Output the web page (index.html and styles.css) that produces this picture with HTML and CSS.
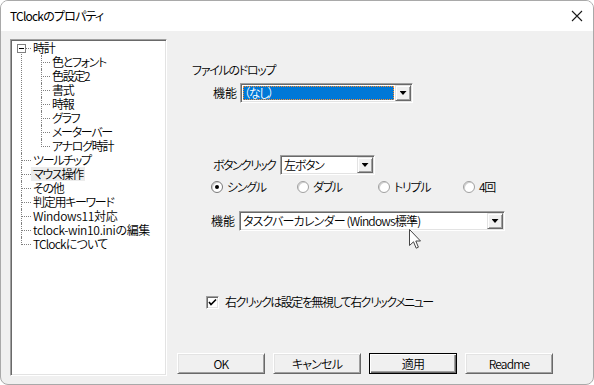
FILE: index.html
```html
<!DOCTYPE html>
<html lang="ja">
<head>
<meta charset="utf-8">
<title>TClockのプロパティ</title>
<link rel="stylesheet" href="styles.css">
</head>
<body>
<div class="window">
  <header class="titlebar">
    <span class="title">TClockのプロパティ</span>
    <span class="close">
      <svg width="12" height="12" viewBox="0 0 12 12"><path d="M1 1L11 11M11 1L1 11" stroke="#1a1a1a" stroke-width="1.1" fill="none"/></svg>
    </span>
  </header>
  <div class="body">
    <div class="tree">
      <ul class="lvl0">
        <li class="open"><span class="box"></span><span class="label">時計</span>
          <ul class="lvl1">
            <li><span class="label">色とフォント</span></li>
            <li><span class="label">色設定2</span></li>
            <li><span class="label">書式</span></li>
            <li><span class="label">時報</span></li>
            <li><span class="label">グラフ</span></li>
            <li><span class="label">メーターバー</span></li>
            <li><span class="label">アナログ時計</span></li>
          </ul>
        </li>
        <li><span class="label">ツールチップ</span></li>
        <li><span class="label sel">マウス操作</span></li>
        <li><span class="label">その他</span></li>
        <li><span class="label">判定用キーワード</span></li>
        <li><span class="label lat">Windows11対応</span></li>
        <li><span class="label lat">tclock-win10.iniの編集</span></li>
        <li><span class="label lat2">TClockについて</span></li>
      </ul>
    </div>
    <div class="main">
      <div class="form">
        <div class="group-title">ファイルのドロップ</div>
        <div class="row row-drop">
          <span class="lbl lbl-func1">機能</span>
          <div class="combo combo-drop focused"><span class="val">（なし）</span><span class="drop"></span></div>
        </div>
        <div class="row row-click">
          <span class="lbl lbl-click">ボタンクリック</span>
          <div class="combo combo-click"><span class="val">左ボタン</span><span class="drop"></span></div>
        </div>
        <div class="radios">
          <label class="radio-item"><span class="radio checked"></span>シングル</label>
          <label class="radio-item"><span class="radio"></span>ダブル</label>
          <label class="radio-item"><span class="radio"></span>トリプル</label>
          <label class="radio-item"><span class="radio"></span>4回</label>
        </div>
        <div class="row row-func">
          <span class="lbl lbl-func2">機能</span>
          <div class="combo combo-func"><span class="val lat2">タスクバーカレンダー (Windows標準)</span><span class="drop"></span></div>
        </div>
        <div class="check-row">
          <span class="check">
            <svg width="9" height="9" viewBox="0 0 9 9"><path d="M1 4L3 6.5L8 1.5" stroke="#000" stroke-width="1.6" fill="none"/></svg>
          </span>
          <span class="check-label">右クリックは設定を無視して右クリックメニュー</span>
        </div>
      </div>
      <div class="buttons">
        <button class="btn">OK</button>
        <button class="btn">キャンセル</button>
        <button class="btn default">適用</button>
        <button class="btn">Readme</button>
      </div>
    </div>
  </div>
  <svg class="cursor" width="13" height="21" viewBox="0 0 13 21"><path d="M0.5 0.5L0.5 16.5L4.5 12.8L7.2 19.2L9.4 18.2L6.8 12L11.5 12Z" fill="#fff" stroke="#444" stroke-width="1" stroke-linejoin="miter"/></svg>
</div>
</body>
</html>
```
FILE: styles.css
```css
* { box-sizing: border-box; }
html, body { margin: 0; padding: 0; }
body {
  width: 594px;
  height: 385px;
  overflow: hidden;
  font-family: "Noto Sans CJK JP", "Noto Sans", sans-serif;
  font-size: 12px;
  font-weight: 350;
  font-feature-settings: "palt" 1;
  letter-spacing: -1.3px;
  color: #000;
  background: #fff;
}
.lat { letter-spacing: -0.3px; }
.lat2 { letter-spacing: -0.8px; }
.window {
  position: relative;
  width: 594px;
  height: 385px;
  border: 1px solid #a9a9a9;
  border-radius: 8px;
  overflow: hidden;
  display: flex;
  flex-direction: column;
  background: #f0f0f0;
}
.titlebar {
  height: 30px;
  flex: none;
  background: #fff;
  display: flex;
  align-items: center;
  justify-content: space-between;
  padding-left: 9px;
  padding-right: 10px;
  font-size: 12px;
  font-weight: 400;
  letter-spacing: -0.8px;
  color: #000;
}
.title { line-height: 14px; }
.close { display: flex; width: 12px; height: 12px; }

.body {
  flex: 1;
  display: flex;
  padding: 8px 0 8px 9px;
}

/* tree */
.tree {
  width: 157px;
  flex: none;
  background: #fff;
  border: 1px solid;
  border-color: #a0a0a0 #fff #fff #a0a0a0;
  box-shadow: inset 1px 1px #696969, inset -1px -1px #e3e3e3;
  padding: 1px;
}
.tree ul { list-style: none; margin: 0; padding: 0; }
.tree li {
  position: relative;
  line-height: 14px;
}
.label {
  display: inline-block;
  height: 14px;
  line-height: 14px;
  padding: 0 2px;
  white-space: nowrap;
  position: relative;
  z-index: 1;
}
.lvl0 > li > .label { margin-left: 19px; }
.lvl1 > li > .label { margin-left: 38px; }
.sel { background: #ececec; }

.lvl0 > li::before,
.lvl1 > li::before {
  content: "";
  position: absolute;
  top: 7px;
  border-top: 1px dotted #808080;
}
.lvl0 > li::before { left: 9px; width: 10px; }
.lvl1 > li::before { left: 29px; width: 9px; }
.lvl0 > li::after,
.lvl1 > li::after {
  content: "";
  position: absolute;
  top: 0;
  bottom: 0;
  border-left: 1px dotted #808080;
}
.lvl0 > li::after { left: 9px; }
.lvl1 > li::after { left: 29px; }
.lvl0 > li:first-child::after { top: 8px; }
.lvl0 > li:last-child::after,
.lvl1 > li:last-child::after { bottom: auto; height: 8px; }
.box {
  position: absolute;
  left: 5px;
  top: 3px;
  width: 9px;
  height: 9px;
  border: 1px solid #808080;
  background: #fff;
  z-index: 2;
}
.box::after {
  content: "";
  position: absolute;
  left: 1px;
  top: 3px;
  width: 5px;
  height: 1px;
  background: #000;
}

/* main */
.main {
  flex: 1;
  display: flex;
  flex-direction: column;
}
.form {
  flex: 1;
  padding: 24px 0 0 25px;
}
.group-title { line-height: 14px; height: 14px; }
.row {
  display: flex;
  align-items: center;
  height: 20px;
}
.row-drop { margin-top: 6px; margin-left: 21px; }
.row-click { margin-top: 52px; margin-left: 21px; }
.row-func { margin-top: 17px; margin-left: 19px; }
.lbl { white-space: nowrap; line-height: 14px; flex: none; }
.lbl-func1 { width: 27px; letter-spacing: 0; }
.lbl-click { width: 67px; letter-spacing: -1.6px; }
.lbl-func2 { width: 28px; letter-spacing: 0; }

.combo {
  display: flex;
  height: 20px;
  background: #fff;
  border: 1px solid;
  border-color: #a0a0a0 #fff #fff #a0a0a0;
  box-shadow: inset 1px 1px #696969, inset -1px -1px #e3e3e3;
  padding: 1px;
}
.combo-drop { width: 173px; }
.combo-click { width: 95px; }
.combo-func { width: 266px; }
.val {
  flex: 1;
  line-height: 14px;
  height: 16px;
  padding: 1px 2px;
  white-space: nowrap;
}
.focused .val {
  margin: 1px;
  height: 14px;
  padding: 0 1px;
  background: #0078d7;
  color: #fff;
  outline: 1px dotted #ff8c28;
  outline-offset: -1px;
}
.drop {
  width: 16px;
  height: 16px;
  flex: none;
  background: #f0f0f0;
  border: 1px solid;
  border-color: #e3e3e3 #696969 #696969 #e3e3e3;
  box-shadow: inset 1px 1px #fff, inset -1px -1px #a0a0a0;
  display: flex;
  align-items: center;
  justify-content: center;
}
.drop::after {
  content: "";
  width: 7px;
  height: 4px;
  background: #000;
  clip-path: polygon(0 0, 100% 0, 50% 100%);
}

.radios {
  display: grid;
  grid-template-columns: 86px 81px 85px auto;
  margin-top: 5px;
  margin-left: 19px;
  height: 14px;
  align-items: center;
}
.radio-item {
  display: flex;
  align-items: center;
  gap: 4px;
  line-height: 14px;
  white-space: nowrap;
}
.radio {
  width: 12px;
  height: 12px;
  border-radius: 50%;
  background: #fff;
  border: 1px solid #a0a0a0;
  box-shadow: inset 1px 1px #d0d0d0;
  display: flex;
  align-items: center;
  justify-content: center;
}
.radio.checked { border-color: #7a7a7a; }
.radio.checked::after {
  content: "";
  width: 4px;
  height: 4px;
  border-radius: 50%;
  background: #000;
}

.check-row {
  display: flex;
  align-items: center;
  gap: 6px;
  margin-top: 64px;
  margin-left: 14px;
  height: 14px;
  line-height: 14px;
}
.check-label { letter-spacing: -1.5px; }
.check {
  width: 13px;
  height: 13px;
  background: #fff;
  border: 1px solid;
  border-color: #a0a0a0 #fff #fff #a0a0a0;
  box-shadow: inset 1px 1px #696969, inset -1px -1px #e3e3e3;
  display: flex;
  align-items: center;
  justify-content: center;
}

.buttons {
  display: flex;
  gap: 8px;
  padding-left: 10px;
  margin-bottom: 2px;
}
.btn {
  width: 88px;
  height: 21px;
  padding: 0;
  font: inherit;
  font-size: 12px;
  letter-spacing: -0.8px;
  color: #000;
  background: #f0f0f0;
  border: 1px solid;
  border-color: #fff #696969 #696969 #fff;
  box-shadow: inset 1px 1px #e3e3e3, inset -1px -1px #a0a0a0;
  line-height: 14px;
}
.btn.default {
  border-color: #000;
  box-shadow: inset 1px 1px #fff, inset -1px -1px #696969, inset -2px -2px #a0a0a0;
}

.cursor {
  position: absolute;
  left: 408px;
  top: 228px;
}
```
